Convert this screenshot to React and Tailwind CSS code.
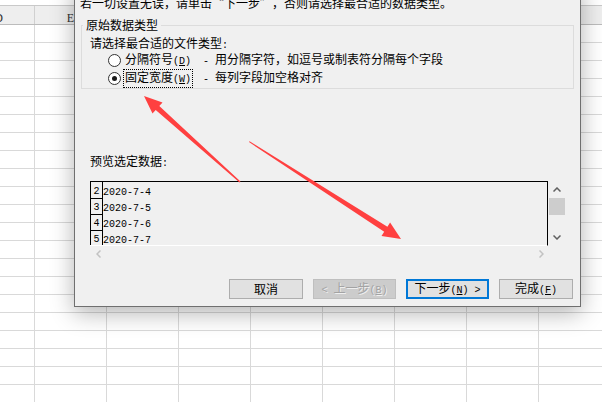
const cols = ['D', 'E', 'F', 'G', 'H', 'I', 'J', 'K', 'L'];
const rows = Array.from({ length: 22 }, (_, i) => i);
const preview = [
  { n: '2', d: '2020-7-4', h: 'h-[17px]' },
  { n: '3', d: '2020-7-5', h: 'h-[16px]' },
  { n: '4', d: '2020-7-6', h: 'h-[16px]' },
  { n: '5', d: '2020-7-7', h: 'h-[16px]' },
];

function M({ children }) {
  return <span className="font-['Liberation_Mono',monospace] text-[10px]">{children}</span>;
}
function U({ children }) {
  return <span className="underline">{children}</span>;
}

function Radio({ checked }) {
  return (
    <span className="w-[13px] h-[13px] shrink-0 rounded-full border border-[#333333] bg-white flex items-center justify-center">
      {checked && <span className="w-[5px] h-[5px] rounded-full bg-[#1a1a1a]" />}
    </span>
  );
}

function Btn({ w, kind, children }) {
  const base = 'h-[20px] flex items-center justify-center leading-[16px] whitespace-pre';
  let cls = `${base} ${w} bg-[#e1e1e1] border border-[#adadad]`;
  if (kind === 'disabled')
    cls = `${base} ${w} bg-[#cccccc] border border-[#bfbfbf] text-[#a3a3a3] [text-shadow:1px_1px_0_rgba(255,255,255,0.7)]`;
  if (kind === 'default') cls = `${base} ${w} bg-[#e1e1e1] border-2 border-[#0078d7]`;
  return (
    <div className={cls}>
      <span className="whitespace-pre">{children}</span>
    </div>
  );
}

export default function App() {
  return (
    <div className="relative w-[602px] h-[402px] overflow-hidden bg-white text-black text-[12px] font-['Noto_Sans_CJK_SC',sans-serif]">
      {/* spreadsheet background */}
      <div className="flex flex-col">
        <div className="h-[6px] bg-white border-b border-[#c9c9c9]" />
        <div className="flex -ml-[37px] h-[19px] bg-[#eeeeee] border-b border-[#bcbcbc]">
          {cols.map((c) => (
            <div
              key={c}
              className="w-[72px] shrink-0 border-r border-[#d0d0d0] flex items-center justify-center pt-[5px] leading-[12px] font-['Liberation_Serif',serif] text-[12px] text-[#333333]"
            >
              {c}
            </div>
          ))}
        </div>
        {rows.map((r) => (
          <div key={r} className="flex -ml-[37px] h-[18px] shrink-0 border-b border-[#d9d9d9]">
            {cols.map((c) => (
              <div key={c} className="w-[72px] shrink-0 border-r border-[#d9d9d9]" />
            ))}
          </div>
        ))}
      </div>

      {/* dialog */}
      <div className="absolute left-[74px] top-[-20px] w-[507px] h-[327px] bg-[#f0f0f0] border border-[#6f6f6f] shadow-[0_6px_22px_rgba(0,0,0,0.3)] flex flex-col pl-[5px] pr-[7px] pt-[14px]">
        <div className="leading-[16px] whitespace-nowrap">
          若一切设置无误，请单击<span className="inline-block w-[12px] text-right">“</span>下一步<span className="inline-block w-[12px] text-left">”</span>，否则请选择最合适的数据类型。
        </div>

        <div className="relative mt-[14px] ml-[1px] w-[493px] h-[64px] shrink-0 border border-[#dcdcdc] pl-[8px] pt-[9px] flex flex-col">
          <span className="absolute left-[1px] top-[-9px] px-[3px] bg-[#f0f0f0] leading-[16px]">原始数据类型</span>
          <div className="leading-[16px] h-[16px]">
            请选择最合适的文件类型<M>:</M>
          </div>
          <div className="flex items-center h-[18px] pl-[18px]">
            <Radio />
            <div className="w-[80px] ml-[2px] flex">
              <span className="flex items-center border border-dotted border-transparent px-[1px] leading-[14px] whitespace-nowrap">
                <span>
                  分隔符号<M>(<U>D</U>)</M>
                </span>
              </span>
            </div>
            <span className="leading-[16px] whitespace-pre">
              <M>- </M>用分隔字符，如逗号或制表符分隔每个字段
            </span>
          </div>
          <div className="flex items-center h-[18px] pl-[18px]">
            <Radio checked />
            <div className="w-[80px] ml-[2px] flex">
              <span className="flex items-center border border-dotted border-black px-[1px] leading-[14px] whitespace-nowrap">
                <span>
                  固定宽度<M>(<U>W</U>)</M>
                </span>
              </span>
            </div>
            <span className="leading-[16px] whitespace-pre">
              <M>- </M>每列字段加空格对齐
            </span>
          </div>
        </div>

        <div className="mt-[64px] ml-[10px] leading-[16px] h-[16px]">
          预览选定数据<M>:</M>
        </div>

        <div className="ml-[10px] mt-[12px] flex flex-col w-[475px]">
          <div className="flex">
            <div className="w-[458px] h-[65px] shrink-0 border-t border-r border-b border-black border-b-white flex flex-col overflow-hidden">
              {preview.map((p) => (
                <div key={p.n} className={`flex shrink-0 ${p.h}`}>
                  <div className="w-[13px] shrink-0 border-l border-r border-b border-black flex items-end justify-center font-['Liberation_Mono',monospace] text-[10px] leading-[12px]">
                    {p.n}
                  </div>
                  <div className="flex items-end font-['Liberation_Mono',monospace] text-[10px] leading-[12px]">
                    {p.d}
                  </div>
                </div>
              ))}
            </div>
            <div className="w-[17px] h-[65px] shrink-0 flex flex-col">
              <div className="h-[17px] flex items-center justify-center">
                <svg width="8" height="5" viewBox="0 0 8 5">
                  <path d="M0.5 4.5 L4 1 L7.5 4.5" stroke="#606060" strokeWidth="1.5" fill="none" />
                </svg>
              </div>
              <div className="ml-[1px] w-[16px] h-[17px] bg-[#cdcdcd]" />
              <div className="flex-1" />
              <div className="h-[17px] flex items-center justify-center">
                <svg width="8" height="5" viewBox="0 0 8 5">
                  <path d="M0.5 0.5 L4 4 L7.5 0.5" stroke="#606060" strokeWidth="1.5" fill="none" />
                </svg>
              </div>
            </div>
          </div>
          <div className="w-[458px] h-[15px] flex items-center justify-between pl-[6px] pr-[4px]">
            <svg width="5" height="8" viewBox="0 0 5 8">
              <path d="M4.5 0.5 L1 4 L4.5 7.5" stroke="#c2c2c2" strokeWidth="1.5" fill="none" />
            </svg>
            <svg width="5" height="8" viewBox="0 0 5 8">
              <path d="M0.5 0.5 L4 4 L0.5 7.5" stroke="#c2c2c2" strokeWidth="1.5" fill="none" />
            </svg>
          </div>
        </div>

        <div className="mt-[18px] flex justify-end gap-[10px]">
          <Btn w="w-[74px]">取消</Btn>
          <Btn w="w-[83px]" kind="disabled">
            <M>{'< '}</M>上一步<M>(<U>B</U>)</M>
          </Btn>
          <Btn w="w-[83px]" kind="default">
            下一步<M>(<U>N</U>){' >'}</M>
          </Btn>
          <Btn w="w-[74px]">
            完成<M>(<U>F</U>)</M>
          </Btn>
        </div>
      </div>

      {/* red annotation arrows */}
      <svg className="absolute left-0 top-0 pointer-events-none" width="602" height="402" viewBox="0 0 602 402">
        <polygon
          points="144,96 162.5,102.5 159.3,106 240.5,181.5 239.5,182.5 155.7,110 152.5,113.5"
          fill="#ff4040"
        />
        <polygon
          points="401,239 381.5,236.1 384.2,231.8 249,142.1 249.6,141.3 387.4,226.8 390.1,222.5"
          fill="#ff4040"
        />
      </svg>
    </div>
  );
}
